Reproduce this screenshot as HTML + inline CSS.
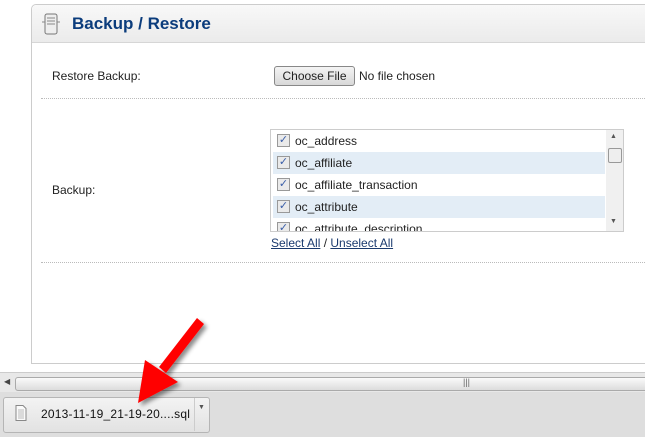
<!DOCTYPE html>
<html><head><style>
body{margin:0;width:645px;height:437px;background:#fff;font-family:"Liberation Sans",Arial,sans-serif;position:relative;overflow:hidden;font-size:12px;color:#222}
.abs{position:absolute}
.panel{left:31px;top:4px;width:640px;height:358px;border:1px solid #ccc;border-radius:5px 0 0 0;background:#fff}
.hdr{left:0;top:0;width:640px;height:37px;background:linear-gradient(#f8f8f8,#ebebeb);border-bottom:1px solid #d6d6d6;border-radius:5px 0 0 0}
.hdr span{position:absolute;left:40px;top:9px;font-size:17px;font-weight:bold;color:#0b3c7c}
.dot{left:41px;width:610px;border-top:1px dotted #bbb;height:0}
.row{position:absolute;left:2px;width:332px;height:22px;font-size:12px;line-height:22px}
.row i{position:absolute;left:4px;top:4px;width:11px;height:11px;border:1px solid #999;background:#eaeaea;font-style:normal;font-size:11px;line-height:11px;text-align:center;color:#3a5ea8}
.row b{font-weight:normal;position:absolute;left:22px}
a{color:#1a3a6e}
</style></head><body>
<div class="abs panel">
 <div class="abs hdr">
  <svg class="abs" style="left:9px;top:8px" width="20" height="22" viewBox="0 0 20 22"><rect x="4" y="1" width="12" height="20" rx="2" fill="#eee" stroke="#777"/><line x1="6" y1="5" x2="14" y2="5" stroke="#888"/><line x1="6" y1="8" x2="14" y2="8" stroke="#888"/><line x1="6" y1="11" x2="14" y2="11" stroke="#888"/><line x1="1" y1="9" x2="4" y2="9" stroke="#888"/><line x1="16" y1="9" x2="19" y2="9" stroke="#888"/></svg>
  <span>Backup / Restore</span>
 </div>
</div>
<div class="abs" style="left:52px;top:69px">Restore Backup:</div>
<div class="abs" style="left:274px;top:66px;width:79px;height:18px;border:1px solid #888;border-radius:3px;background:linear-gradient(#f4f4f4,#d8d8d8);text-align:center;line-height:18px">Choose File</div>
<div class="abs" style="left:359px;top:69px">No file chosen</div>
<div class="abs dot" style="top:98px"></div>
<div class="abs" style="left:52px;top:183px">Backup:</div>
<div class="abs" style="left:270px;top:129px;width:352px;height:101px;border:1px solid #ccc;overflow:hidden">
 <div class="row" style="top:0"><i>✓</i><b>oc_address</b></div>
 <div class="row" style="top:22px;background:#e3edf6"><i>✓</i><b>oc_affiliate</b></div>
 <div class="row" style="top:44px"><i>✓</i><b>oc_affiliate_transaction</b></div>
 <div class="row" style="top:66px;background:#e3edf6"><i>✓</i><b>oc_attribute</b></div>
 <div class="row" style="top:88px"><i>✓</i><b>oc_attribute_description</b></div>
 <div class="abs" style="left:335px;top:0;width:17px;height:101px;background:#f0f0f0"></div>
 <div class="abs" style="left:337px;top:18px;width:12px;height:13px;border:1px solid #999;border-radius:2px;background:#eee"></div>
 <div class="abs" style="left:339px;top:3px;font-size:7px;color:#555">▲</div>
 <div class="abs" style="left:339px;top:88px;font-size:7px;color:#555">▼</div>
</div>
<div class="abs" style="left:271px;top:236px"><a href="#">Select All</a> / <a href="#">Unselect All</a></div>
<div class="abs dot" style="top:262px"></div>
<div class="abs" style="left:0;top:372px;width:645px;height:20px;background:#e8e8e8;border-top:1px solid #ccc"></div>
<div class="abs" style="left:15px;top:377px;width:640px;height:12px;border:1px solid #aaa;border-radius:3px;background:linear-gradient(#fafafa,#dcdcdc)"></div>
<div class="abs" style="left:4px;top:377px;font-size:8px;color:#444">◀</div>
<div class="abs" style="left:463px;top:377px;font-size:9px;color:#666">|||</div>
<div class="abs" style="left:0;top:392px;width:645px;height:45px;background:#dedede"></div>
<div class="abs" style="left:3px;top:397px;width:205px;height:34px;border:1px solid #b5b5b5;border-radius:3px;background:linear-gradient(#f3f3f3,#e2e2e2)"></div>
<div class="abs" style="left:194px;top:398px;width:1px;height:33px;background:#ccc"></div>
<div class="abs" style="left:198px;top:404px;font-size:7px;color:#555">▼</div>
<svg class="abs" style="left:15px;top:405px" width="12" height="16"><path d="M1 .5H8L11 3.5V15.5H1Z" fill="#fafafa" stroke="#888"/><path d="M3 5H9M3 7H9M3 9H9M3 11H9M3 13H9" stroke="#bbb"/></svg>
<div class="abs" style="left:41px;top:407px;font-size:12px;color:#111;letter-spacing:0.2px">2013-11-19_21-19-20....sql</div>
<svg class="abs" style="left:0;top:0" width="645" height="437"><defs><filter id="s"><feDropShadow dx="3" dy="3" stdDeviation="2" flood-opacity=".45"/></filter></defs>
<g filter="url(#s)" fill="#f00"><path d="M197 318L204 324L166 373L159 367Z"/><path d="M145 360L178 382L138 403Z"/></g></svg>
</body></html>
